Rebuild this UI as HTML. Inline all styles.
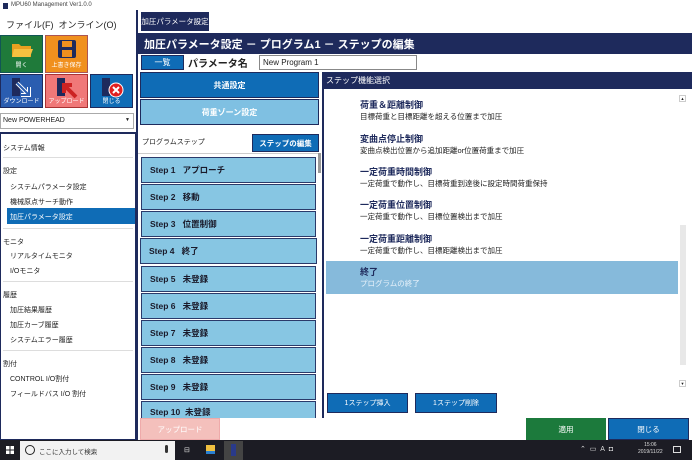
<!DOCTYPE html>
<html><head><meta charset="utf-8"><style>
*{margin:0;padding:0;box-sizing:border-box}
body{width:692px;height:460px;overflow:hidden;background:#fff;position:relative;font-family:"Liberation Sans","Noto Sans CJK JP",sans-serif;font-size:8px;color:#222}
.a{position:absolute}
.nv{background:#1e2a5c;color:#fff}
.bl{background:#0f6cb6;color:#fff}
.c{display:flex;align-items:center;justify-content:center}
.step{position:absolute;left:141px;width:175px;height:26px;background:#87c6e3;border:1.5px solid #2a3a6a;font-size:8.5px;font-weight:bold;padding-left:8px;display:flex;align-items:center;color:#1a1a2a}
.side div{position:absolute;font-size:7px;color:#222}
.it .t{position:absolute;left:360px;font-size:9px;font-weight:bold;color:#1e2a5c}
.it .d{position:absolute;left:360px;font-size:7.5px;color:#222}
</style></head><body>
<div class="a" style="left:3px;top:3px;width:5px;height:6px;background:#1e2a5c"></div>
<div class="a" style="left:11px;top:2px;font-size:6px;color:#444">MPU60 Management Ver1.0.0</div>
<div class="a" style="left:6px;top:18px;font-size:9px">ファイル(F)&nbsp; オンライン(O)</div>
<div class="a c" style="left:0;top:35px;width:43px;height:38px;background:#1f7a3a;border:1px solid #155"><svg width="24" height="18" style="position:absolute;top:5px"><path d="M2 3h7l2 2h10v11H2z" fill="#e8a020"/><path d="M4 8h19l-3 8H2z" fill="#f6c040"/></svg><span style="position:absolute;bottom:3px;color:#fff;font-size:6px">開く</span></div>
<div class="a c" style="left:45px;top:35px;width:43px;height:38px;background:#f0901e;border:1px solid #a55"><svg width="20" height="20" style="position:absolute;top:3px"><rect x="1" y="1" width="18" height="18" rx="2" fill="#1e2a5c"/><rect x="5" y="2" width="10" height="6" fill="#f0901e"/><rect x="5" y="11" width="10" height="7" fill="#f0901e"/></svg><span style="position:absolute;bottom:3px;color:#fff;font-size:6px">上書き保存</span></div>
<div class="a c" style="left:0;top:74px;width:43px;height:34px;background:#2a5db0;border:1px solid #1e2a5c"><svg width="26" height="22" style="position:absolute;top:2px"><rect x="3" y="1" width="8" height="18" fill="#1e2a5c"/><path d="M8 6l12 12M20 10v8h-8" stroke="#fff" stroke-width="4" fill="none"/><path d="M8 6l12 12M20 10v8h-8" stroke="#2a5db0" stroke-width="2" fill="none"/></svg><span style="position:absolute;bottom:2px;color:#fff;font-size:6px">ダウンロード</span></div>
<div class="a c" style="left:45px;top:74px;width:43px;height:34px;background:#f07878;border:1px solid #a33"><svg width="26" height="22" style="position:absolute;top:2px"><rect x="3" y="1" width="8" height="18" fill="#1e2a5c"/><path d="M22 20L10 8M10 16V8h8" stroke="#c22" stroke-width="4" fill="none"/></svg><span style="position:absolute;bottom:2px;color:#fff;font-size:6px">アップロード</span></div>
<div class="a c" style="left:90px;top:74px;width:43px;height:34px;background:#0f6cb6;border:1px solid #1e2a5c"><svg width="26" height="22" style="position:absolute;top:2px"><rect x="3" y="1" width="8" height="18" fill="#1e2a5c"/><circle cx="17" cy="13" r="7" fill="#e02020" stroke="#fff"/><path d="M14 10l6 6M20 10l-6 6" stroke="#fff" stroke-width="2"/></svg><span style="position:absolute;bottom:2px;color:#fff;font-size:6px">閉じる</span></div>
<div class="a" style="left:0;top:113px;width:134px;height:16px;border:1px solid #aaa;font-size:7px;padding:3px 2px">New POWERHEAD<span style="position:absolute;right:3px;font-size:5px">▼</span></div>
<div class="a" style="left:0;top:132px;width:136px;height:308px;border:1px solid #1e2a5c;border-top:2px solid #1e2a5c"></div>
<div class="side">
<div style="left:3px;top:143px">システム情報</div>
<div class="a" style="left:3px;top:157px;width:130px;height:1px;background:#ddd"></div>
<div style="left:3px;top:166px">設定</div>
<div style="left:10px;top:182px">システムパラメータ設定</div>
<div style="left:10px;top:197px">機械原点サーチ動作</div>
<div class="a" style="left:7px;top:208px;width:128px;height:16px;background:#0f6cb6"></div>
<div style="left:10px;top:212px;color:#fff">加圧パラメータ設定</div>
<div class="a" style="left:3px;top:228px;width:130px;height:1px;background:#ddd"></div>
<div style="left:3px;top:237px">モニタ</div>
<div style="left:10px;top:251px">リアルタイムモニタ</div>
<div style="left:10px;top:266px">I/Oモニタ</div>
<div class="a" style="left:3px;top:281px;width:130px;height:1px;background:#ddd"></div>
<div style="left:3px;top:290px">履歴</div>
<div style="left:10px;top:305px">加圧結果履歴</div>
<div style="left:10px;top:320px">加圧カーブ履歴</div>
<div style="left:10px;top:335px">システムエラー履歴</div>
<div class="a" style="left:3px;top:350px;width:130px;height:1px;background:#ddd"></div>
<div style="left:3px;top:359px">割付</div>
<div style="left:10px;top:374px">CONTROL I/O割付</div>
<div style="left:10px;top:389px">フィールドバス I/O 割付</div>
</div>
<div class="a" style="left:136px;top:10px;width:2px;height:430px;background:#1e2a5c"></div>
<div class="a nv c" style="left:141px;top:12px;width:68px;height:19px;font-size:7.5px">加圧パラメータ設定</div>
<div class="a nv" style="left:138px;top:33px;width:554px;height:21px;font-size:11px;font-weight:bold;padding:3px 6px">加圧パラメータ設定 － プログラム1 － ステップの編集</div>
<div class="a bl c" style="left:141px;top:55px;width:43px;height:15px;font-size:8px;border:1px solid #1e2a5c">一覧</div>
<div class="a" style="left:188px;top:55px;font-size:10px;font-weight:bold">パラメータ名</div>
<div class="a" style="left:259px;top:55px;width:158px;height:15px;border:1px solid #888;font-size:8px;padding:2px 3px">New Program 1</div>
<div class="a bl c" style="left:140px;top:72px;width:179px;height:26px;font-size:8px;font-weight:bold;border:1px solid #1e2a5c">共通設定</div>
<div class="a c" style="left:140px;top:99px;width:179px;height:26px;font-size:8px;font-weight:bold;background:#7fc0e2;color:#fff;border:1px solid #1e2a5c">荷重ゾーン設定</div>
<div class="a" style="left:142px;top:137px;font-size:7px">プログラムステップ</div>
<div class="a bl c" style="left:252px;top:134px;width:67px;height:18px;font-size:7.5px;font-weight:bold;border:1px solid #1e2a5c">ステップの編集</div>
<div class="a" style="left:138px;top:153px;width:182px;height:1px;background:#ccc"></div>
<div class="step" style="top:157px">Step 1&nbsp;&nbsp; アプローチ</div>
<div class="step" style="top:184px">Step 2&nbsp;&nbsp; 移動</div>
<div class="step" style="top:211px">Step 3&nbsp;&nbsp; 位置制御</div>
<div class="step" style="top:238px;width:177px;left:140px">Step 4&nbsp;&nbsp; 終了</div>
<div class="step" style="top:266px">Step 5&nbsp;&nbsp; 未登録</div>
<div class="step" style="top:293px">Step 6&nbsp;&nbsp; 未登録</div>
<div class="step" style="top:320px">Step 7&nbsp;&nbsp; 未登録</div>
<div class="step" style="top:347px">Step 8&nbsp;&nbsp; 未登録</div>
<div class="step" style="top:374px">Step 9&nbsp;&nbsp; 未登録</div>
<div class="step" style="top:401px;height:17px;align-items:flex-end;border-bottom:none">Step 10&nbsp; 未登録</div>
<div class="a" style="left:318px;top:153px;width:3px;height:20px;background:#999"></div>
<div class="a nv" style="left:322px;top:72px;width:370px;height:17px;font-size:8px;padding:3px 4px">ステップ機能選択</div>
<div class="a" style="left:322px;top:89px;width:2px;height:329px;background:#1e2a5c"></div>
<div class="a" style="left:326px;top:261px;width:352px;height:33px;background:#86badb"></div>
<div class="it">
<div class="t" style="top:98px">荷重＆距離制御</div><div class="d" style="top:111px">目標荷重と目標距離を超える位置まで加圧</div>
<div class="t" style="top:132px">変曲点停止制御</div><div class="d" style="top:145px">変曲点検出位置から追加距離or位置荷重まで加圧</div>
<div class="t" style="top:165px">一定荷重時間制御</div><div class="d" style="top:178px">一定荷重で動作し、目標荷重到達後に設定時間荷重保持</div>
<div class="t" style="top:198px">一定荷重位置制御</div><div class="d" style="top:211px">一定荷重で動作し、目標位置検出まで加圧</div>
<div class="t" style="top:232px">一定荷重距離制御</div><div class="d" style="top:245px">一定荷重で動作し、目標距離検出まで加圧</div>
<div class="t" style="top:265px">終了</div><div class="d" style="top:278px;color:#e8f2fa">プログラムの終了</div>
</div>
<div class="a" style="left:679px;top:95px;width:7px;height:7px;border:1px solid #ccc;font-size:4px;text-align:center">▲</div>
<div class="a" style="left:680px;top:225px;width:6px;height:140px;background:#e8e8e8"></div>
<div class="a" style="left:679px;top:380px;width:7px;height:7px;border:1px solid #ccc;font-size:4px;text-align:center">▼</div>
<div class="a bl c" style="left:327px;top:393px;width:81px;height:20px;font-size:7px;border:1px solid #1e2a5c">1ステップ挿入</div>
<div class="a bl c" style="left:415px;top:393px;width:82px;height:20px;font-size:7px;border:1px solid #1e2a5c">1ステップ削除</div>
<div class="a c" style="left:140px;top:418px;width:80px;height:22px;background:#f4c0bc;color:#fff;font-size:7.5px;border:1px solid #eaa">アップロード</div>
<div class="a c" style="left:526px;top:418px;width:80px;height:22px;background:#1c7a3c;color:#fff;font-size:7.5px">適用</div>
<div class="a c" style="left:608px;top:418px;width:81px;height:22px;background:#0f6cb6;color:#fff;font-size:7.5px;border:1px solid #1e2a5c">閉じる</div>
<div class="a" style="left:0;top:440px;width:692px;height:20px;background:#1c1c24"></div>
<svg class="a" style="left:6px;top:446px" width="8" height="8"><rect x="0" y="0" width="3.5" height="3.5" fill="#fff"/><rect x="4.5" y="0" width="3.5" height="3.5" fill="#fff"/><rect x="0" y="4.5" width="3.5" height="3.5" fill="#fff"/><rect x="4.5" y="4.5" width="3.5" height="3.5" fill="#fff"/></svg>
<div class="a" style="left:20px;top:441px;width:155px;height:19px;background:#f2f2f2"></div>
<div class="a" style="left:25px;top:445px;width:10px;height:10px;border:1.5px solid #222;border-radius:50%"></div>
<div class="a" style="left:39px;top:446px;font-size:6.5px;color:#333">ここに入力して検索</div>
<div class="a" style="left:165px;top:445px;width:3px;height:8px;background:#333;border-radius:2px"></div>
<div class="a" style="left:184px;top:446px;font-size:7px;color:#ddd">⊟</div>
<div class="a" style="left:206px;top:445px;width:9px;height:9px;background:#f0c040;border-bottom:3px solid #2a80d0"></div>
<div class="a" style="left:224px;top:441px;width:19px;height:19px;background:#444"></div>
<div class="a" style="left:231px;top:444px;width:5px;height:12px;background:#2a3a8a"></div>
<div class="a" style="left:580px;top:445px;font-size:7px;color:#ddd">⌃&nbsp;&nbsp;▭&nbsp;&nbsp;A&nbsp;&nbsp;◘</div>
<div class="a" style="left:638px;top:442px;font-size:5px;color:#ddd;text-align:center;line-height:7px">15:06<br>2019/11/22</div>
<div class="a" style="left:673px;top:446px;width:8px;height:7px;border:1px solid #ddd"></div>
</body></html>
